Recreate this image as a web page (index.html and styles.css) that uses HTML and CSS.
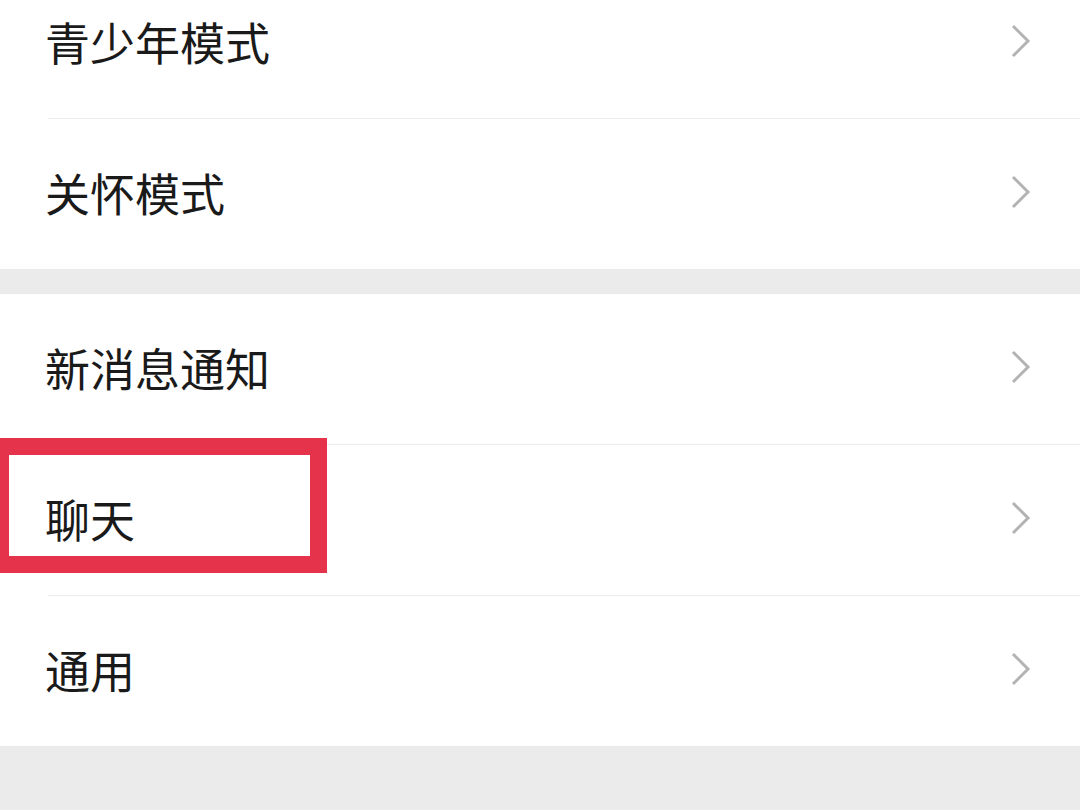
FILE: index.html
```html
<!DOCTYPE html>
<html lang="zh-CN">
<head>
  <meta charset="UTF-8">
  <meta name="viewport" content="width=device-width, initial-scale=1.0">
  <title>设置</title>
  <link rel="stylesheet" href="styles.css">
</head>
<body>
  <div class="screen">
    <div class="group group-first">
      <div class="row">
        <span class="label">青少年模式</span>
        <svg class="arrow" viewBox="0 0 20 34"><polyline points="2,2 17,17 2,32"/></svg>
      </div>
      <div class="row">
        <span class="label">关怀模式</span>
        <svg class="arrow" viewBox="0 0 20 34"><polyline points="2,2 17,17 2,32"/></svg>
      </div>
    </div>

    <div class="group">
      <div class="row">
        <span class="label">新消息通知</span>
        <svg class="arrow" viewBox="0 0 20 34"><polyline points="2,2 17,17 2,32"/></svg>
      </div>
      <div class="row row-marked">
        <span class="label">聊天</span>
        <svg class="arrow" viewBox="0 0 20 34"><polyline points="2,2 17,17 2,32"/></svg>
        <div class="highlight"></div>
      </div>
      <div class="row">
        <span class="label">通用</span>
        <svg class="arrow" viewBox="0 0 20 34"><polyline points="2,2 17,17 2,32"/></svg>
      </div>
    </div>
  </div>
</body>
</html>
```

FILE: styles.css
```css
html, body {
  margin: 0;
  height: 100%;
  overflow: hidden;
}
body {
  background: #ebebeb;
  font-family: "Noto Sans CJK SC", "Noto Sans", sans-serif;
  color: #1a1a1a;
}
.group {
  background: #fff;
  margin-bottom: 25px;
}
/* list is scrolled a little, first row is cut at the top */
.group-first {
  margin-top: -32px;
}
.row {
  position: relative;
  height: 150px;
  display: flex;
  align-items: center;
  justify-content: space-between;
  padding: 0 49px 0 45px;
}
.row + .row {
  margin-top: 1px;
}
.row + .row::before {
  content: "";
  position: absolute;
  top: -1px;
  left: 48px;
  right: 0;
  height: 1px;
  background: #ececec;
}
.label {
  font-size: 45px;
  line-height: 1;
  margin-top: -4px;
}
.arrow {
  width: 20px;
  height: 34px;
  margin-top: -4px;
  fill: none;
  stroke: #b3b3b3;
  stroke-width: 3;
}
.highlight {
  position: absolute;
  left: -8px;
  top: -7px;
  width: 301px;
  height: 101px;
  border: 17px solid #e5334b;
}
```
